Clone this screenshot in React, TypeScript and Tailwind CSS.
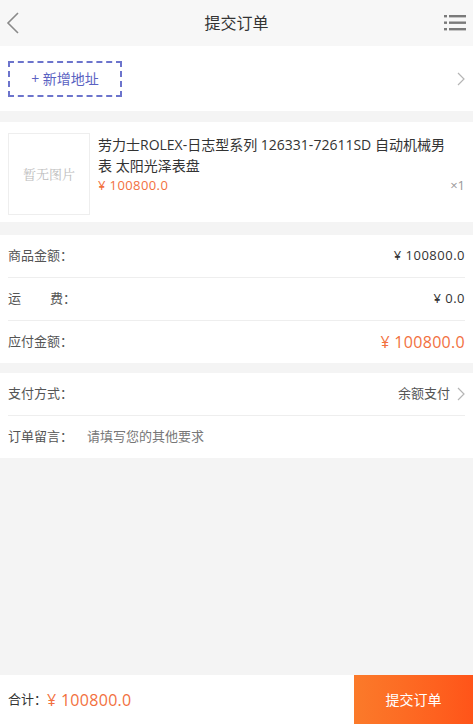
const font = { fontFamily: '"Open Sans", "Noto Sans CJK SC", sans-serif' };

const Chevron = ({ className = '' }: { className?: string }) => (
  <svg className={className} width="8" height="14" viewBox="0 0 8 14" fill="none">
    <path d="M1 1l6 6-6 6" stroke="#b5b5b5" strokeWidth="1.2" />
  </svg>
);

const Row = ({ label, value, divider = true }: { label: React.ReactNode; value: React.ReactNode; divider?: boolean }) => (
  <div className={`mx-2 flex items-center justify-between text-[13px] ${divider ? 'h-[43px] border-b border-[#eeeeee]' : 'h-[42px]'}`}>
    <div className="text-[#555]">{label}</div>
    {value}
  </div>
);

export default function App() {
  return (
    <div className="flex h-[724px] w-full flex-col bg-[#f4f4f4]" style={font}>
      {/* header */}
      <div className="grid h-[46px] grid-cols-[48px_1fr_48px] items-center bg-[#f7f7f7] px-[6px]">
        <svg width="14" height="24" viewBox="0 0 14 24" fill="none">
          <path d="M12 2L2 12l10 10" stroke="#8a8a8a" strokeWidth="1.6" />
        </svg>
        <div className="text-center text-[16px] text-[#333]">提交订单</div>
        <svg className="justify-self-end" width="24" height="18" viewBox="0 0 24 18" fill="#7a7a7a">
          <rect x="1" y="1" width="3" height="2.4" />
          <rect x="6" y="1" width="17" height="2.4" />
          <rect x="1" y="7.5" width="3" height="2.4" />
          <rect x="6" y="7.5" width="17" height="2.4" />
          <rect x="1" y="14" width="3" height="2.4" />
          <rect x="6" y="14" width="17" height="2.4" />
        </svg>
      </div>

      {/* address */}
      <div className="flex h-[65px] items-center justify-between bg-white px-2">
        <div className="flex h-[36px] w-[114px] items-center justify-center border-2 border-dashed border-[#6c74cc] text-[14px] text-[#5a62c2]">
          + 新增地址
        </div>
        <Chevron />
      </div>

      {/* product */}
      <div className="mt-[11px] flex h-[100px] bg-white px-2 pt-[11px]">
        <div
          className="flex h-[82px] w-[82px] shrink-0 items-center justify-center border border-[#eeeeee] text-[13px] text-[#bdbdbd]"
          style={{ fontFamily: '"Noto Serif CJK SC", "Noto Sans CJK SC", serif' }}
        >
          暂无图片
        </div>
        <div className="ml-2 flex flex-1 flex-col pt-[1px]">
          <div className="pr-[12px] text-[14px] leading-[21px] text-[#333]">
            劳力士ROLEX-日志型系列 126331-72611SD 自动机械男表 太阳光泽表盘
          </div>
          <div className="flex items-center justify-between">
            <span className="text-[13px] tracking-[0.4px] text-[#f2703e]">¥ 100800.0</span>
            <span className="text-[13px] text-[#999]">×1</span>
          </div>
        </div>
      </div>

      {/* summary */}
      <div className="mt-[13px] bg-white">
        <Row label="商品金额：" value={<span className="tracking-[0.5px] text-[#333]">¥ 100800.0</span>} />
        <Row
          label={
            <span>
              运<span className="inline-block w-[29px]" />费：
            </span>
          }
          value={<span className="tracking-[0.5px] text-[#333]">¥ 0.0</span>}
        />
        <Row
          label="应付金额："
          value={<span className="text-[16px] tracking-[0.3px] text-[#f2703e]">¥ 100800.0</span>}
          divider={false}
        />
      </div>

      {/* pay */}
      <div className="mt-[10px] bg-white">
        <Row
          label="支付方式："
          value={
            <span className="flex items-center gap-[7px] text-[#555]">
              余额支付
              <Chevron />
            </span>
          }
        />
        <div className="mx-2 flex h-[42px] items-center text-[13px]">
          <span className="text-[#555]">订单留言：</span>
          <span className="ml-[14px] text-[#777]">请填写您的其他要求</span>
        </div>
      </div>

      <div className="flex-1" />

      {/* bottom bar */}
      <div className="flex h-[49px] items-center bg-white">
        <div className="flex flex-1 items-center pl-2">
          <span className="text-[13px] text-[#333]">合计：</span>
          <span className="text-[16px] tracking-[0.3px] text-[#f2703e]">¥ 100800.0</span>
        </div>
        <div className="flex h-full w-[119px] items-center justify-center bg-gradient-to-r from-[#fb7a2a] to-[#ff5419] text-[14px] text-white">
          提交订单
        </div>
      </div>
    </div>
  );
}
